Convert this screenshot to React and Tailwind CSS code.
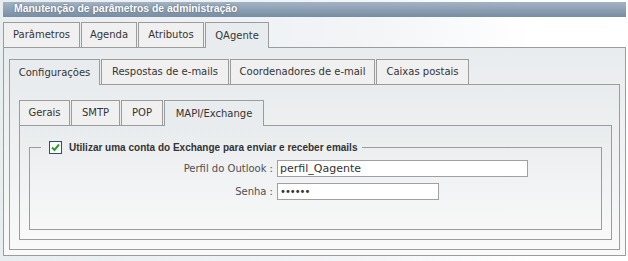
import React from "react";

const Tab = ({ label, w, active }) => (
  <div
    className={
      "flex items-center justify-center border border-b-0 border-[#9c9c9c] text-[#353535] " +
      (active
        ? "relative z-10 h-[26px] -mb-px bg-[#e9ecee]"
        : "h-[25px] bg-[#f0f0f0]")
    }
    style={{ width: w }}
  >
    {label}
  </div>
);

const Tabs = ({ tabs, children, pad }) => (
  <div>
    <div className="flex items-end gap-px">
      {tabs.map((t) => (
        <Tab key={t.label} {...t} />
      ))}
    </div>
    <div
      className={
        "border border-[#9c9c9c] bg-gradient-to-b from-[#e9ecee] to-[#f9f9f9] " + pad
      }
    >
      {children}
    </div>
  </div>
);

const Check = () => (
  <div className="w-[13px] h-[13px] border border-[#2b4e78] bg-white flex items-center justify-center">
    <svg width="11" height="11" viewBox="0 0 11 11">
      <path d="M2 5.5 L4.5 8 L9 2.5" fill="none" stroke="#2aa02a" strokeWidth="2" />
    </svg>
  </div>
);

export default function App() {
  return (
    <div className="w-[628px] h-[261px] overflow-hidden bg-[linear-gradient(to_right,#e8edf0,#f3f5f7_60%,#ffffff_85%)] font-['DejaVu_Sans',Verdana,sans-serif] text-[10px] leading-none">
      <div className="pt-[2px] pl-[3px] w-[626px]">
        <div className="h-[15px] w-[623px] bg-gradient-to-b from-[#a3b3c3] to-[#788da3] text-white font-bold text-[10.4px] font-['Liberation_Sans',Arial,sans-serif] flex items-center pl-[11px] [text-shadow:0_0_2px_#4a5a6a]">
          Manutenção de parâmetros de administração
        </div>
        <div className="mt-[5px] w-[623px]">
          <Tabs
            pad="pt-[11px] pl-[5px] pr-[5px] pb-[5px]"
            tabs={[
              { label: "Parâmetros", w: 77 },
              { label: "Agenda", w: 56 },
              { label: "Atributos", w: 66 },
              { label: "QAgente", w: 64, active: true },
            ]}
          >
            <Tabs
              pad="pt-[15px] pl-[9px] pr-[7px] pb-[9px]"
              tabs={[
                { label: "Configurações", w: 91, active: true },
                { label: "Respostas de e-mails", w: 128 },
                { label: "Coordenadores de e-mail", w: 145 },
                { label: "Caixas postais", w: 93 },
              ]}
            >
              <Tabs
                pad="pt-0 pl-[9px] pr-[9px] pb-[9px]"
                tabs={[
                  { label: "Gerais", w: 51 },
                  { label: "SMTP", w: 49 },
                  { label: "POP", w: 42 },
                  { label: "MAPI/Exchange", w: 100, active: true },
                ]}
              >
                <fieldset className="mt-[14px] border border-[#9c9c9c] pl-[11px] pb-[29px]">
                  <legend className="h-[15px] pl-[8px] pr-[5px] flex items-center font-bold text-[10px] font-['Liberation_Sans',Arial,sans-serif] text-[#333]">
                    <Check />
                    <span className="ml-[7px]">
                      Utilizar uma conta do Exchange para enviar e receber emails
                    </span>
                  </legend>
                  <div className="mt-[5px] flex items-center">
                    <div className="w-[232px] text-right text-[#505050]">Perfil do Outlook :</div>
                    <input
                      readOnly
                      value="perfil_Qagente"
                      className="ml-[4px] w-[251px] h-[17px] border border-[#a0a0a0] bg-white pl-[2px] text-[11px] leading-[15px] text-[#333] font-['DejaVu_Sans',sans-serif] outline-none"
                    />
                  </div>
                  <div className="mt-[6px] flex items-center">
                    <div className="w-[232px] text-right text-[#505050]">Senha :</div>
                    <input
                      readOnly
                      type="password"
                      value="123456"
                      className="ml-[4px] w-[162px] h-[17px] border border-[#a0a0a0] bg-white pl-[2px] text-[10px] leading-[15px] tracking-[-1px] text-[#333] font-['DejaVu_Sans',sans-serif] outline-none"
                    />
                  </div>
                </fieldset>
              </Tabs>
            </Tabs>
          </Tabs>
        </div>
      </div>
    </div>
  );
}
